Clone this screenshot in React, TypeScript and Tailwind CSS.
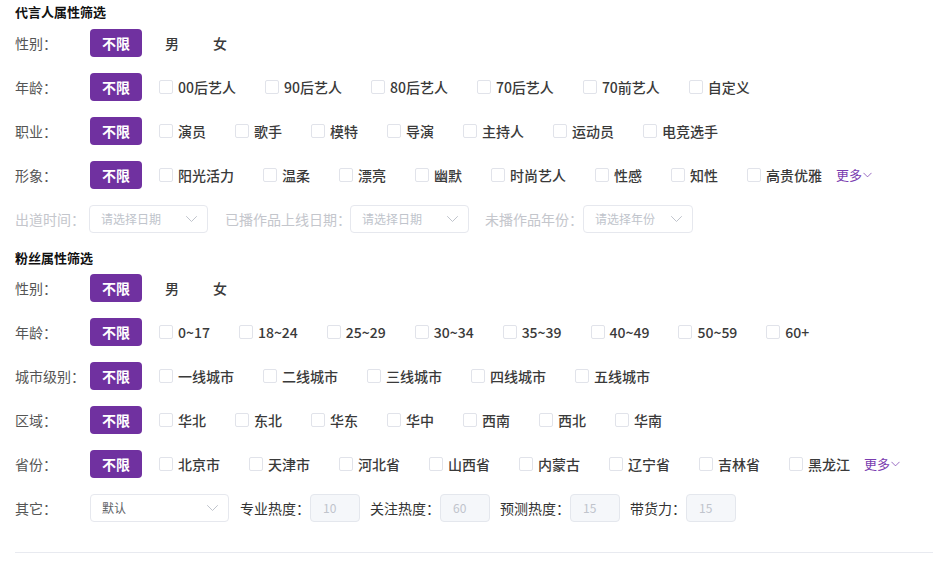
import React from "react";

const FONT = { fontFamily: '"Noto Sans CJK SC", "Noto Sans", sans-serif' };

function Chevron({ className = "" }: { className?: string }) {
  return (
    <svg className={className} viewBox="0 0 12 8" fill="none" stroke="currentColor" strokeWidth="1" strokeLinecap="round" strokeLinejoin="round">
      <path d="M1 1.5 L6 6.5 L11 1.5" />
    </svg>
  );
}

function AllBtn() {
  return (
    <div className="flex h-[28px] w-[52px] shrink-0 items-center justify-center rounded-[4px] bg-[#7031a0] text-[14px] font-bold text-white">
      不限
    </div>
  );
}

function Label({ children }: { children: React.ReactNode }) {
  return <div className="w-[75px] shrink-0 whitespace-nowrap text-[14px] text-[#555]">{children}</div>;
}

function CheckRow({ label, items, more }: { label: string; items: string[]; more?: boolean }) {
  return (
    <div className="flex h-[28px] items-center">
      <Label>{label}</Label>
      <AllBtn />
      <div className="ml-[17px] flex items-center gap-[29px]">
        {items.map((t) => (
          <div key={t} className="flex items-center">
            <span className="h-[14px] w-[14px] rounded-[2px] border border-[#e1e3ea] bg-white" />
            <span className="ml-[5px] whitespace-nowrap text-[14px] font-medium text-[#3a3a3a]">{t}</span>
          </div>
        ))}
      </div>
      {more && (
        <div className="ml-[14px] flex items-center text-[13px] text-[#7a3db0]">
          更多
          <Chevron className="ml-[1px] h-[6px] w-[9px]" />
        </div>
      )}
    </div>
  );
}

function GenderRow() {
  return (
    <div className="flex h-[28px] items-center">
      <Label>性别：</Label>
      <AllBtn />
      <span className="ml-[23px] text-[14px] font-medium text-[#3a3a3a]">男</span>
      <span className="ml-[34px] text-[14px] font-medium text-[#3a3a3a]">女</span>
    </div>
  );
}

function Select({ w, text, dark }: { w: string; text: string; dark?: boolean }) {
  return (
    <div className={`flex h-[28px] shrink-0 items-center justify-between rounded-[4px] border border-[#e6e8ee] bg-white pl-[11px] pr-[9px] ${w}`}>
      <span className={`whitespace-nowrap text-[12px] ${dark ? "text-[#606266]" : "text-[#c0c4cc]"}`}>{text}</span>
      <Chevron className="h-[8px] w-[13px] text-[#c0c4cc]" />
    </div>
  );
}

function NumInput({ v }: { v: string }) {
  return (
    <div className="flex h-[28px] w-[50px] shrink-0 items-center rounded-[4px] border border-[#e4e7ed] bg-[#f5f7fa] pl-[12px] text-[12px] text-[#c0c4cc]">
      {v}
    </div>
  );
}

function Title({ children, className = "" }: { children: React.ReactNode; className?: string }) {
  return <div className={`h-[20px] text-[13px] font-bold leading-[20px] text-[#111] ${className}`}>{children}</div>;
}

export default function App() {
  return (
    <div className="w-[933px] bg-white pl-[15px] pt-[2px]" style={FONT}>
      <Title>代言人属性筛选</Title>
      <div className="mt-[7px] flex flex-col gap-[16px]">
        <GenderRow />
        <CheckRow label="年龄：" items={["00后艺人", "90后艺人", "80后艺人", "70后艺人", "70前艺人", "自定义"]} />
        <CheckRow label="职业：" items={["演员", "歌手", "模特", "导演", "主持人", "运动员", "电竞选手"]} />
        <CheckRow label="形象：" items={["阳光活力", "温柔", "漂亮", "幽默", "时尚艺人", "性感", "知性", "高贵优雅"]} more />
      </div>
      <div className="mt-[16px] flex h-[28px] items-center whitespace-nowrap text-[14px] text-[#c4c6cc]">
        <div className="w-[74px] shrink-0">出道时间：</div>
        <Select w="w-[119px]" text="请选择日期" />
        <div className="ml-[17px] w-[125px] shrink-0">已播作品上线日期：</div>
        <Select w="w-[119px]" text="请选择日期" />
        <div className="ml-[16px] w-[98px] shrink-0">未播作品年份：</div>
        <Select w="w-[110px]" text="请选择年份" />
      </div>
      <Title className="mt-[15px]">粉丝属性筛选</Title>
      <div className="mt-[6px] flex flex-col gap-[16px]">
        <GenderRow />
        <CheckRow label="年龄：" items={["0~17", "18~24", "25~29", "30~34", "35~39", "40~49", "50~59", "60+"]} />
        <CheckRow label="城市级别：" items={["一线城市", "二线城市", "三线城市", "四线城市", "五线城市"]} />
        <CheckRow label="区域：" items={["华北", "东北", "华东", "华中", "西南", "西北", "华南"]} />
        <CheckRow label="省份：" items={["北京市", "天津市", "河北省", "山西省", "内蒙古", "辽宁省", "吉林省", "黑龙江"]} more />
        <div className="flex h-[28px] items-center whitespace-nowrap text-[14px] text-[#333]">
          <Label>其它：</Label>
          <Select w="w-[139px]" text="默认" dark />
          <div className="ml-[11px] w-[70px] shrink-0">专业热度：</div>
          <NumInput v="10" />
          <div className="ml-[10px] w-[70px] shrink-0">关注热度：</div>
          <NumInput v="60" />
          <div className="ml-[10px] w-[70px] shrink-0">预测热度：</div>
          <NumInput v="15" />
          <div className="ml-[10px] w-[56px] shrink-0">带货力：</div>
          <NumInput v="15" />
        </div>
      </div>
      <div className="mt-[30px] h-px bg-[#e8eaf0]" />
      <div className="h-[12px]" />
    </div>
  );
}
